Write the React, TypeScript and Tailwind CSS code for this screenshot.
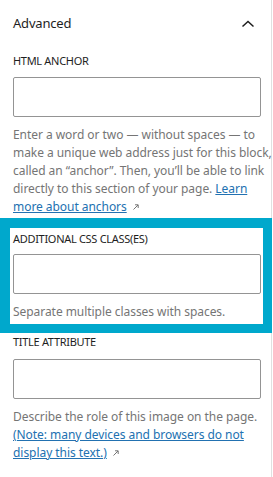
import React from 'react';

const Label: React.FC<{ text: string; className?: string }> = ({ text, className = '' }) => (
  <div className={`text-[11px] leading-[16px] uppercase tracking-[-0.3px] text-[#1e1e1e] ${className}`}>{text}</div>
);

const Field: React.FC<{ className?: string }> = ({ className = '' }) => (
  <input
    type="text"
    className={`block w-[248px] h-[40px] border border-[#949494] rounded-[2px] bg-white outline-none ${className}`}
  />
);

const External = () => (
  <svg className="inline-block ml-[5px] align-[0px]" width="8" height="8" viewBox="0 0 8 8" fill="none">
    <path d="M1.5 6.5L6 2M3 1.8H6.2V5" stroke="#757575" strokeWidth="1" />
  </svg>
);

const help = 'text-[12px] leading-[18px] text-[#757575] tracking-[-0.05px] whitespace-nowrap';

export default function App() {
  return (
    <div className="w-[273px] h-[477px] bg-white overflow-hidden font-['Noto_Sans','Open_Sans',sans-serif]">
      <div className="border-r border-[#e0e0e0] mr-px h-full">
        {/* Panel header */}
        <div className="flex items-center justify-between h-[48px] pl-[13px] pr-[11px]">
          <span className="text-[13px] tracking-[-0.2px] text-[#1e1e1e]">Advanced</span>
          <svg width="24" height="24" viewBox="0 0 24 24" fill="none">
            <path d="M6.5 14.5L12 9.5L17.5 14.5" stroke="#1e1e1e" strokeWidth="1.5" />
          </svg>
        </div>

        {/* HTML anchor */}
        <div className="pl-[13px] pr-[11px] pt-[5px]">
          <Label text="HTML Anchor" />
          <Field className="mt-[8px]" />
          <p className={`mt-[9px] ${help}`}>
            Enter a word or two — without spaces — to
            <br />
            make a unique web address just for this block,
            <br />
            called an “anchor”. Then, you’ll be able to link
            <br />
            directly to this section of your page.{' '}
            <a href="#" className="text-[#2271b1] underline">Learn</a>
            <br />
            <a href="#" className="text-[#2271b1] underline">more about anchors</a>
            <External />
          </p>
        </div>

        {/* Highlighted: additional css classes */}
        <div className="mt-[2px] -mr-px border-t-[10px] border-l-[10px] border-r-[9px] border-b-[9px] border-[#00a8cc] pl-[3px] pt-[3px] pb-[3px]">
          <Label text="Additional CSS class(es)" />
          <Field className="mt-[7px]" />
          <p className={`mt-[9px] ${help}`}>Separate multiple classes with spaces.</p>
        </div>

        {/* Title attribute */}
        <div className="pl-[13px] pr-[11px] pt-[1px]">
          <Label text="Title attribute" />
          <Field className="mt-[9px]" />
          <p className={`mt-[9px] ${help}`}>
            Describe the role of this image on the page.
            <br />
            <a href="#" className="text-[#2271b1] underline">(Note: many devices and browsers do not</a>
            <br />
            <a href="#" className="text-[#2271b1] underline">display this text.)</a>
            <External />
          </p>
        </div>
      </div>
    </div>
  );
}
